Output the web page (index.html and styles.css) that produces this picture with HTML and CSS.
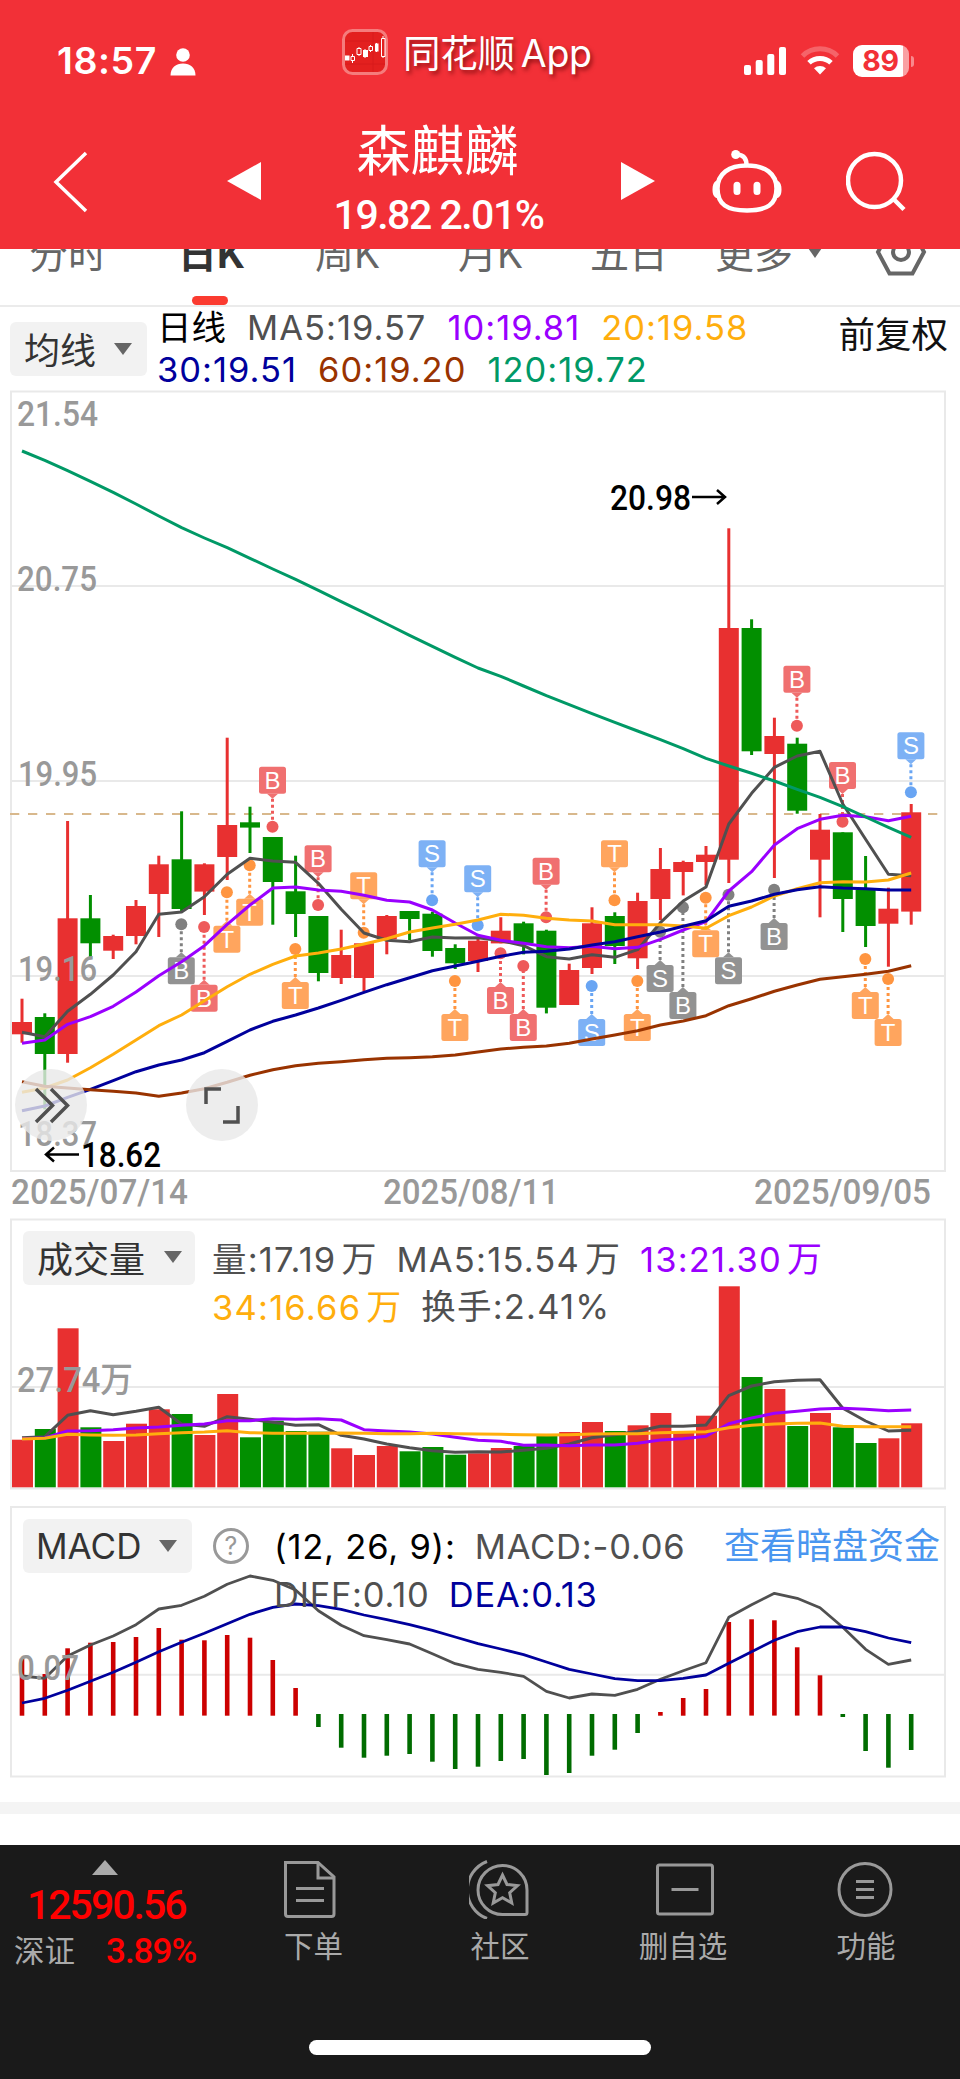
FILE: index.html
```html
<!DOCTYPE html>
<html lang="zh-CN">
<head>
<meta charset="utf-8">
<title>森麒麟 日K</title>
<link rel="stylesheet" href="styles.css">
</head>
<body>
<div class="screen">
  <header class="header">
    <div class="status">
      <div class="status-time"><span class="clock">18:57</span>
        <svg class="person" viewBox="0 0 26 28"><circle cx="13" cy="7" r="6.8"/><path d="M.5 27.500C.5 19.500 6 15.500 13 15.500s12.500 4 12.500 12z"/></svg>
      </div>
      <div class="status-app">
        <svg class="app-icon" viewBox="0 0 46 46"><rect x="1.500" y="1.500" width="43" height="43" rx="9" fill="#e3201f" stroke="#f57c7c" stroke-width="3"/><path d="M3 12h40M3 35h40M31 3v40" stroke="#d81a1c" stroke-width="1"/><g stroke="#fff" stroke-width="1" fill="none"><path d="M10.500 25v9M17 18v9M23 20v9M28.500 16v7M34.500 14v9M41 7v22"/></g><path fill="#fff" d="M3 26.500h4.500v5H3zM21 21h5v7h-5zM33 14.500h3.500v8H33z"/><g fill="#e3201f" stroke="#fff"><path d="M9 27.500h3.500v4H9zM15 19.500h4v6h-4zM27 17.500h3.500v4H27zM39.500 9.500H43v18h-3.500z"/></g></svg>
        <span>同花顺 App</span>
      </div>
      <div class="status-right">
        <svg class="signal" viewBox="0 0 42 28"><rect x="0" y="18" width="7" height="10" rx="2"/><rect x="11.700" y="13" width="7" height="15" rx="2"/><rect x="23.300" y="7" width="7" height="21" rx="2"/><rect x="35" y="0" width="7" height="28" rx="2"/></svg>
        <svg class="wifi" viewBox="0 0 40 30"><path d="M2.500 11a25 25 0 0 1 35 0" stroke-opacity=".25"/><path d="M9 17.800a16 16 0 0 1 22 0"/><path d="M20 29.500l-6-6.200a9 9 0 0 1 12 0z" fill="#fff" stroke="none"/></svg>
        <div class="battery"><span>89</span></div><i class="battery-cap"></i>
      </div>
    </div>
    <div class="navbar">
      <svg class="back" viewBox="0 0 36 62"><path d="M33 2L3 31l30 29"/></svg>
      <svg class="prev" viewBox="0 0 34 38"><path d="M34 0v38L0 19z"/></svg>
      <div class="stock"><h1>森麒麟</h1><p>19.82 2.01%</p></div>
      <svg class="next" viewBox="0 0 34 38"><path d="M0 0v38l34-19z"/></svg>
      <svg class="robot" viewBox="0 0 70 66"><path d="M35 17.500c18 0 29.500 8 29.500 23 0 16-9.500 22-29.500 22S5.500 56.500 5.500 40.500c0-15 11.500-23 29.500-23z"/><path class="fill" d="M6 32.500H4.500C1.500 34 .5 37 .5 41.500s1 7 4 8.500H6zM64 32.500h1.500c3 1.500 4 4.500 4 9s-1 7-4 8.500H64z"/><path d="M34.500 17c0-6.500-3-10-9-10.500"/><circle cx="23.700" cy="6.500" r="4.500" class="fill"/><path d="M25 37.200v6.300M45 37.200v6.300" class="eye"/></svg>
      <svg class="search" viewBox="0 0 62 62"><circle cx="28.500" cy="29.500" r="26.500"/><path d="M47.500 48l10.500 10.500"/></svg>
    </div>
  </header>

  <nav class="tabs">
    <span class="t1">分时</span><span class="t2 active">日K</span><span class="t3">周K</span><span class="t4">月K</span><span class="t5">五日</span><span class="t6">更多<i class="caret"></i></span>
    <svg class="hex" viewBox="0 0 52 48"><path d="M14.500 2.500h23L49 24 37.500 45.500h-23L3 24z"/><circle cx="26" cy="24" r="8"/></svg>
  </nav>

  <section class="info">
    <button class="pill">均线<i class="caret"></i></button>
    <div class="legend legend-price">
      <div class="row"><span class="black zh">日线</span><span class="c-gray">MA5:19.57</span><span class="c-purple">10:19.81</span><span class="c-orange">20:19.58</span></div>
      <div class="row"><span class="c-blue">30:19.51</span><span class="c-brown">60:19.20</span><span class="c-green">120:19.72</span></div>
    </div>
    <span class="adjust">前复权</span>
  </section>

  <section class="panel panel-price">
    <svg id="price" viewBox="0 389 960 823"></svg>
    <div class="tools">
      <button class="round"><svg viewBox="0 0 72 72"><path d="M21 20l16.500 16.500L21 53M36 20l16.500 16.500L36 53"/></svg></button>
      <button class="round"><svg viewBox="0 0 72 72"><path d="M35 20H20v15M52 37v16H37"/></svg></button>
    </div>
  </section>

  <section class="panel panel-volume">
    <svg id="volume" viewBox="0 1212 960 286"></svg>
    <div class="overlay">
      <button class="pill">成交量<i class="caret"></i></button>
      <div class="legend">
        <div class="row"><span class="c-gray">量:17.19<b>万</b></span><span class="c-gray">MA5:15.54<b>万</b></span><span class="c-purple">13:21.30<b>万</b></span></div>
        <div class="row"><span class="c-orange">34:16.66<b>万</b></span><span class="c-gray">换手:2.41%</span></div>
      </div>
    </div>
  </section>

  <section class="panel panel-macd">
    <svg id="macd" viewBox="0 1498 960 304"></svg>
    <div class="overlay">
      <button class="pill latin">MACD<i class="caret"></i></button>
      <span class="help">?</span>
      <div class="legend legend-macd">
        <div class="row"><span class="black">(12, 26, 9):</span><span class="c-gray">MACD:-0.06</span></div>
        <div class="row"><span class="c-gray">DIFF:0.10</span><span class="c-blue">DEA:0.13</span></div>
      </div>
      <a class="link">查看暗盘资金</a>
    </div>
  </section>

  <div class="divider"></div>

  <footer class="toolbar">
    <div class="index">
      <i class="up"></i>
      <strong>12590.56</strong>
      <div class="index-row"><span>深证</span><em>3.89%</em></div>
    </div>
    <div class="item i1"><svg viewBox="0 0 60 60"><path d="M4.500 3.500h32.500L53 18v37a2.500 2.500 0 0 1-2.500 2.500H7A2.500 2.500 0 0 1 4.500 55z"/><path d="M37 4v15h15M15 29.500h28M15 41.500h28"/></svg><span>下单</span></div>
    <div class="item i2"><svg viewBox="0 0 60 60"><path d="M33.500 6.500A24.500 24.500 0 0 1 58 31v22.500a2 2 0 0 1-2 2H33.500a24.500 24.500 0 0 1 0-49z"/><path d="M18 2.500a30.500 30.500 0 0 0 0 57"/><path d="M33.500 16l4.500 9.500 10.500 1.200-7.800 7 2.100 10.300-9.300-5.200-9.300 5.200 2.100-10.300-7.800-7L29 25.500z"/></svg><span>社区</span></div>
    <div class="item i3"><svg viewBox="0 0 60 60"><rect x="3.500" y="6" width="55" height="49" rx="2"/><path d="M17.500 30.500h27"/></svg><span>删自选</span></div>
    <div class="item i4"><svg viewBox="0 0 60 60"><circle cx="30" cy="30.500" r="26"/><path d="M21 22.500h18M21 30.500h18M21 38.500h18"/></svg><span>功能</span></div>
    <div class="home"></div>
  </footer>
</div>
<script src="charts.js"></script>
</body>
</html>
```

FILE: styles.css
```css
* { box-sizing: border-box; }
body { margin: 0; background: #fff; font-family: Inter, "Noto Sans CJK SC", sans-serif; color: #333; }
h1, p { margin: 0; font-weight: 400; }
button { border: 0; padding: 0; font: inherit; color: inherit; }
svg { display: block; }
i, em, b { font-style: normal; font-weight: 400; }
.screen { width: 960px; height: 2079px; overflow: hidden; display: flex; flex-direction: column; }

/* header */
.header { height: 249px; flex: none; background: #f23037; color: #fff; z-index: 1; }
.status { height: 110px; display: flex; justify-content: space-between; padding: 0 46px 0 57px; }
.status-time { display: flex; align-items: flex-start; gap: 13px; padding-top: 39px; width: 285px; }
.clock { font-size: 37.500px; line-height: 44px; font-weight: 600; letter-spacing: .6px; }
.person { width: 26px; height: 28px; margin-top: 9px; fill: #fff; }
.status-app { display: flex; gap: 15px; padding-top: 29px; flex: 1; }
.app-icon { width: 46px; height: 46px; }
.status-app span { font-size: 37.500px; line-height: 50px; letter-spacing: -.3px; word-spacing: -4px; white-space: nowrap; text-shadow: 2px 3px 4px rgba(90, 0, 0, .65); }
.status-right { display: flex; align-items: flex-start; padding-top: 45px; }
.signal { width: 42px; height: 28px; margin: 2px 14px 0 0; fill: #fff; }
.wifi { width: 40px; height: 30px; margin: 0 13px 0 0; fill: none; stroke: #fff; stroke-width: 5; }
.battery { width: 56px; height: 32px; border-radius: 9px; background: linear-gradient(90deg, #fff 89%, #f9a0a3 89%); display: flex; align-items: center; justify-content: center; }
.battery span { font-size: 28.500px; font-weight: 700; color: #f23037; letter-spacing: -.3px; line-height: 32px; padding-right: 1px; }
.battery-cap { width: 3px; height: 11px; border-radius: 0 4px 4px 0; background: #f9898d; margin: 11px 0 0 2px; }
.navbar { height: 139px; display: flex; align-items: flex-start; padding-left: 53px; }
.back { width: 36px; height: 62px; margin-top: 41px; fill: none; stroke: #fff; stroke-width: 3.500; }
.prev, .next { width: 34px; height: 38px; margin-top: 52px; fill: #fff; }
.prev { margin-left: 138px; }
.stock { width: 360px; text-align: center; }
.stock h1 { font-family: "Noto Sans CJK SC", sans-serif; font-size: 54px; line-height: 60px; margin-top: 8px; padding-right: 7px; }
.stock p { font-family: Roboto, sans-serif; font-weight: 500; font-size: 41px; line-height: 48px; margin-top: 13px; letter-spacing: -1.500px; padding-right: 5px; }
.robot { width: 70px; height: 66px; margin: 38px 0 0 57px; fill: none; stroke: #fff; stroke-width: 4.500; stroke-linecap: round; }
.robot .fill { fill: #fff; stroke: none; }
.robot .eye { stroke-width: 7; }
.search { width: 62px; height: 62px; margin: 41px 0 0 64px; fill: none; stroke: #fff; stroke-width: 4.500; }

/* period tabs, scrolled part-way under the header */
.tabs { height: 58px; flex: none; display: flex; align-items: flex-start; border-bottom: 2px solid #ebebeb; color: #666; font-size: 39px; line-height: 50px; white-space: nowrap; padding-left: 29px; }
.tabs > span { margin-top: -20px; flex: none; }
.t1 { width: 149px; }
.t2 { width: 137px; }
.t3 { width: 143px; }
.t4 { width: 132px; }
.t5 { width: 125px; }
.t6 { width: 160px; display: flex; }
.t6 .caret { margin: 16px 0 0 13px; border-width: 13px 9px 0; }
.active { color: #333; font-weight: 700; display: flex; flex-direction: column; }
.active::after { content: ""; width: 36px; height: 9px; border-radius: 5px; background: #fb3b30; margin: 17px 0 0 14px; }
.hex { width: 52px; height: 48px; margin-top: -21px; fill: none; stroke: #666; stroke-width: 4; }
.caret { display: block; width: 0; height: 0; border-style: solid; border-width: 12px 9px 0; border-color: #666 transparent transparent; }

/* shared pieces */
.pill { height: 54px; flex: none; display: flex; align-items: center; gap: 18px; padding: 0 14px; border-radius: 6px; background: #f2f2f2; font-size: 36px; color: #333; white-space: nowrap; }
.legend .row { display: flex; white-space: nowrap; gap: 20px; font-size: 34.500px; letter-spacing: 1.200px; }
.legend b { font-size: 35px; padding-left: 5px; letter-spacing: 0; }
.black { color: #000; }
.c-gray { color: #505050; }
.c-purple { color: #9a00ff; }
.c-orange { color: #ffae0d; }
.c-blue { color: #00009c; }
.c-brown { color: #993300; }
.c-green { color: #009966; }

.info { height: 82px; flex: none; display: flex; padding: 0 12px 0 10px; }
.info .pill { margin-top: 15px; width: 137px; justify-content: space-between; padding: 0 18px 3px 14px; }
.info .pill .caret { margin-top: 3px; }
.legend-price { margin-left: 10px; flex: 1; }
.legend-price .row { height: 42px; line-height: 42px; letter-spacing: 1px; gap: 21px; }
.legend .zh { letter-spacing: 0; }
.adjust { font-size: 36.500px; line-height: 56px; color: #111; }

.panel { display: grid; flex: none; }
.panel > * { grid-area: 1 / 1; }
.panel-price { height: 823px; }
.panel-volume { height: 286px; }
.panel-macd { height: 304px; }
.panel > svg { width: 960px; height: 100%; }
.tools { display: flex; gap: 99px; align-self: end; padding: 0 0 71px 15px; }
.round { width: 72px; height: 72px; border-radius: 50%; background: rgba(232, 232, 232, .8); }
.round svg { width: 72px; height: 72px; fill: none; stroke: #505050; stroke-width: 3.500; }
.overlay { display: flex; align-items: flex-start; padding: 19px 20px 0 23px; }
.panel-volume .pill { width: 172px; justify-content: space-between; padding: 0 13px 2px 14px; }
.panel-volume .legend { margin: 4px 0 0 17px; }
.overlay .row { height: 48px; line-height: 48px; }
.panel-macd .overlay { padding-top: 21px; }
.panel-macd .pill { width: 169px; justify-content: space-between; padding: 0 17px 0 13px; font-size: 35px; }
.help { width: 36px; height: 36px; flex: none; margin: 9px 0 0 21px; border: 3px solid #999; border-radius: 50%; color: #999; font-size: 25px; line-height: 30px; text-align: center; }
.legend-macd { margin: 4px 0 0 25px; flex: 1; }
.legend-macd .row { letter-spacing: .8px; gap: 19px; }
.link { font-size: 36px; line-height: 54px; color: #4a96f0; white-space: nowrap; }
.divider { height: 12px; flex: none; background: #f4f4f4; margin-bottom: 31px; }

/* chart text */
.num { font-family: Roboto, "Noto Sans CJK SC", sans-serif; font-size: 35px; font-weight: 500; fill: #999; }
.num.ink { fill: #000; }
.mark { font-family: "Liberation Sans", sans-serif; font-size: 24px; fill: #fff; text-anchor: middle; }

/* toolbar */
.toolbar { flex: none; height: 234px; background: #1a1a1a; color: #aaa; display: grid; grid-template-columns: 218px 186px 190px 176px 190px; grid-template-rows: 195px 15px; justify-items: center; }
.index { width: 218px; padding: 15px 0 0 14px; }
.up { display: block; width: 26px; height: 15px; margin-left: 78px; background: #aaa; clip-path: polygon(50% 0, 100% 100%, 0 100%); }
.index strong { display: block; font: 500 41px/44px Roboto, sans-serif; color: #f00; margin: 8px 0 0 13px; letter-spacing: -2px; }
.index-row { display: flex; align-items: center; height: 46px; margin-top: 2px; }
.index-row span { font-size: 30.500px; width: 92px; line-height: 40px; margin-top: -3px; }
.index-row em { font: 500 35px/46px Roboto, sans-serif; color: #f00; letter-spacing: -1px; }
.item { width: 100px; display: flex; flex-direction: column; align-items: center; padding-top: 14px; font-size: 29.500px; line-height: 40px; white-space: nowrap; }
.item span { padding-left: 2px; }
.i1 span { padding-left: 5px; }
.item svg { width: 60px; height: 60px; fill: none; stroke: #999; stroke-width: 3; margin-bottom: 7px; }
.i3 svg { margin-left: 3px; }
.home { grid-column: 1 / -1; width: 342px; height: 15px; border-radius: 8px; background: #fff; }
```

FILE: charts.js
```js
// Day K charts. Series are in thirds of a pixel, measured from the given base line.
const X0 = 22, STEP = 22.8, RED = '#e83030', GREEN = '#028f00';
const cx = i => X0 + STEP * i;
const join = (...parts) => parts.flatMap(([base, list]) => list.map(v => base + v / 3));
const f = n => n.toFixed(1);
const line = (ys, color, w = 3) =>
  `<polyline fill="none" stroke="${color}" stroke-width="${w}" stroke-linejoin="round" points="${ys.map((y, i) => f(cx(i)) + ',' + f(y)).join(' ')}"/>`;
const rect = (x, y, w, h, c) => `<rect x="${f(x)}" y="${f(y)}" width="${f(w)}" height="${f(Math.max(h, 1))}" fill="${c}"/>`;
const num = (x, y, w, s, cls = '') => `<text class="num ${cls}" x="${x}" y="${y}" textLength="${w}" lengthAdjust="spacingAndGlyphs">${s}</text>`;
const frame = (top, bottom, grid) =>
  `<g stroke="#e9e9e9" stroke-width="2" fill="none"><rect x="11" y="${top}" width="934" height="${bottom - top}"/>` +
  grid.map(y => `<path d="M12 ${y}H944"/>`).join('') + '</g>';

// open/close direction of the 40 sessions
const UP = 'RGRGRRRGRRGGGGRRRGGGRRGGRRGRRRRRGRGRGGRR'.split('').map(c => c === 'R');

// [high, body top, body bottom, low]
const candles = [
  [720, [[836,906,943,968],[880,891,1002,1168],[303,595,1002,1028],[525,595,670,716],[644,648,692,717],[540,558,648,673],[407,433,522,651],[274,418,567,573],[430,433,515,585],[53,315,411,480],[260,307,323,399],[351,351,486,614],[407,514,582,651],[588,588,759,784]]],
  [800, [[389,465,534,552],[430,430,534,575],[345,348,418,463],[333,333,357,420],[335,341,453,470],[433,444,490,507],[415,422,483,516],[352,392,430,430],[365,370,430,463],[389,392,623,640],[491,510,615,615],[322,370,504,522],[337,348,438,492],[278,303,475,507]]],
  [600, [[744,807,897,960],[782,786,816,886],[738,764,786,856],[-215,84,779,849],[58,84,454,465],[353,408,462,834],[413,431,632,641],[642,689,779,952],[697,697,897,996],[768,870,978,1041],[863,926,971,1100],[612,637,935,974]]]
].flatMap(([base, rows]) => rows.map(r => r.map(v => base + v / 3)));

const ma = [
  ['#505050', join([720, [937,950,874,823,765,695,583,576,530,463,415,423,427,490]], [800, [328,399,421,425,411,414,413,422,437,470,477,464,472,449]], [600, [968,903,861,672,580,502,468,454,612,718,823,827]])],
  ['#9a00ff', join([720, [970,960,913,890,859,816,767,725,677,613,555,504,501,510]], [800, [274,286,301,306,330,369,406,421,430,440,443,439,446,442]], [600, [1018,990,965,873,815,735,686,658,646,650,662,649]])],
  ['#ffae0d', join([720, [1117,1104,1080,1043,1003,960,917,885,842,800,763,733,708,699]], [800, [447,432,416,396,384,373,360,343,346,355,360,363,374,374]], [600, [974,978,985,947,921,888,866,848,845,846,840,819]])],
  ['#00009c', join([720, [1172,1158,1132,1108,1082,1055,1035,1020,998,964,930,904,885,864]], [800, [601,577,554,533,512,498,484,469,457,454,447,435,425,410]], [600, [996,979,962,919,903,883,869,860,864,866,870,870]])],
  ['#993300', join([720, [1085,1099,1104,1109,1114,1119,1129,1119,1106,1087,1066,1049,1037,1030]], [800, [785,779,775,773,770,765,756,747,742,738,730,717,705,692]], [600, [1275,1263,1247,1217,1196,1174,1155,1138,1130,1123,1114,1097]])],
  ['#009966', join([380, [213,241,272,304,337,372,408,443,474,503,535,567,598,631,665,698,732,766,799,832,864,889,918,947,974,1001,1027,1053,1079,1106,1135,1158,1180,1203,1228,1252]], [600, [620,651,682,712]])]
];

// [session, letter, tone, base, box top, dot centre]
const tones = { r: ['#f07070', '#ee5a5a'], b: ['#7db1f5', '#69a5f3'], o: ['#ffa55e', '#ff9540'], g: ['#929292', '#808080'] };
const marks = [
  [7,'B','g',720,712,613],[8,'B','r',720,794,621],[9,'T','o',720,617,517],[10,'T','o',720,536,436],[11,'B','r',720,140,320],[12,'T','o',720,786,687],[13,'B','r',720,376,555],
  [15,'T','o',800,217,398],[18,'S','b',800,121,301],[19,'T','o',800,642,543],[20,'S','b',800,196,376],[21,'B','r',800,561,460],[22,'B','r',800,642,498],[23,'B','r',800,173,352],[25,'S','b',800,657,558],[26,'T','o',800,121,301],[27,'T','o',800,642,543],
  [28,'S','g',600,1095,995],[29,'B','g',600,1176,922],[30,'T','o',600,991,893],[31,'S','g',600,1072,884],[33,'B','g',600,969,869],[34,'B','r',600,197,377],[36,'B','r',600,486,665],[37,'T','o',600,1176,1077],[38,'T','o',600,1257,1137],[39,'S','b',600,397,577]
];
function mark([i, letter, tone, base, box, dot]) {
  const [fill, deep] = tones[tone], x = cx(i) - .3, top = base + box / 3, d = base + dot / 3, above = top < d;
  const edge = above ? top + 27 : top, tip = above ? edge + 5 : edge - 5;
  return `<path d="M${f(x)} ${f(tip)}V${f(d)}" stroke="${deep}" stroke-width="3" stroke-dasharray="3 3"/>` +
    `<circle cx="${f(x)}" cy="${f(d)}" r="6" fill="${deep}"/>` +
    `<rect x="${f(x - 13.5)}" y="${f(top)}" width="27" height="27" rx="2.5" fill="${fill}"/>` +
    `<path d="M${f(x - 5.5)} ${f(edge)}h11L${f(x)} ${f(tip)}z" fill="${fill}"/>` +
    `<text class="mark" x="${f(x)}" y="${f(top + 22)}">${letter}</text>`;
}

document.getElementById('price').innerHTML =
  frame(391.5, 1171, [586, 781, 976]) +
  '<path d="M10 814H938" stroke="#d8b88c" stroke-width="2" stroke-dasharray="9.300 8.700"/>' +
  candles.map(([h, t, b, l], i) => {
    const c = UP[i] ? RED : GREEN;
    return rect(cx(i) - 1.5, h, 3, l - h, c) + rect(cx(i) - 10, t, 20, b - t, c);
  }).join('') +
  marks.map(mark).join('') +
  ma.map(([c, ys]) => line(ys, c)).join('') +
  num(17, 425.7, 81, '21.54') + num(17, 590.7, 80, '20.75') + num(18, 785.7, 79, '19.95') + num(18, 980.7, 79, '19.16') + num(18, 1145.7, 79, '18.37') +
  num(610, 509.7, 81, '20.98', 'ink') + num(81, 1166.7, 80, '18.62', 'ink') +
  '<path d="M692 497h32M717 490l8 7-8 7M79 1154.500H47M54 1147.500l-8 7 8 7" fill="none" stroke="#000" stroke-width="2.500"/>' +
  num(11, 1204, 177, '2025/07/14') + num(383, 1204, 176, '2025/08/11') + num(754, 1204, 177, '2025/09/05');

const volTops = [719,687,385,682,723,671,628,642,705,582,712,662,693,695,745,765,738,754,741,764,760,744,738,706,696,666,693,676,639,697,647,259,531,567,678,639,682,729,715,670];
const volMa = [
  ['#505050', [713,710,646,632,644,634,622,672,679,650,658,667,676,674,706,717,732,743,752,757,755,756,751,745,732,713,704,694,679,679,675,587,558,545,541,539,625,663,693,691]],
  ['#9a00ff', [716,714,693,692,689,684,681,676,672,662,662,656,658,656,660,689,693,696,702,712,721,724,736,735,737,735,735,730,720,716,709,671,654,640,634,627,625,628,632,630]],
  ['#ffae0d', [717,715,703,705,706,705,701,698,696,692,698,700,700,700,699,700,701,701,700,701,702,703,704,705,704,702,701,701,698,697,695,683,676,672,670,669,679,680,680,680]]
];
document.getElementById('volume').innerHTML =
  frame(1219.5, 1488.5, [1387]) +
  volTops.map((v, i) => rect(cx(i) - 10, 1200 + v / 3, 21, 287.3 - v / 3, UP[i] ? RED : GREEN)).join('') +
  volMa.map(([c, v]) => line(join([1200, v]), c)).join('') +
  num(17, 1391.7, 116, '27.74万');

// bar ends; values above the axis are red, below it green
const hist = [506,552,475,458,456,441,414,449,451,435,443,510,594,711,773,803,797,792,815,837,830,813,807,855,849,797,779,729,666,624,597,396,388,391,472,556,681,783,833,780];
const diff = [558,565,498,465,438,404,357,346,319,283,258,271,300,362,406,437,449,462,491,521,538,547,559,604,624,612,616,598,568,542,518,382,344,310,325,353,412,478,523,510];
const dea = [639,625,601,574,547,517,485,457,430,401,373,352,342,347,358,375,389,404,421,441,461,477,494,516,538,552,566,572,572,565,555,520,485,451,425,411,411,425,444,458];
document.getElementById('macd').innerHTML =
  frame(1507, 1776.5, [1674.7]) +
  hist.map((v, i) => v < 674
    ? rect(cx(i) - 2.3, 1490 + v / 3, 4.6, (677 - v) / 3, '#cc0000')
    : rect(cx(i) - 2.3, 1714, 4.6, (v - 672) / 3, '#006c00')).join('') +
  line(join([1490, diff]), '#505050', 2.8) + line(join([1490, dea]), '#00009c', 2.8) +
  num(17, 1679.7, 62, '0.07');
```
